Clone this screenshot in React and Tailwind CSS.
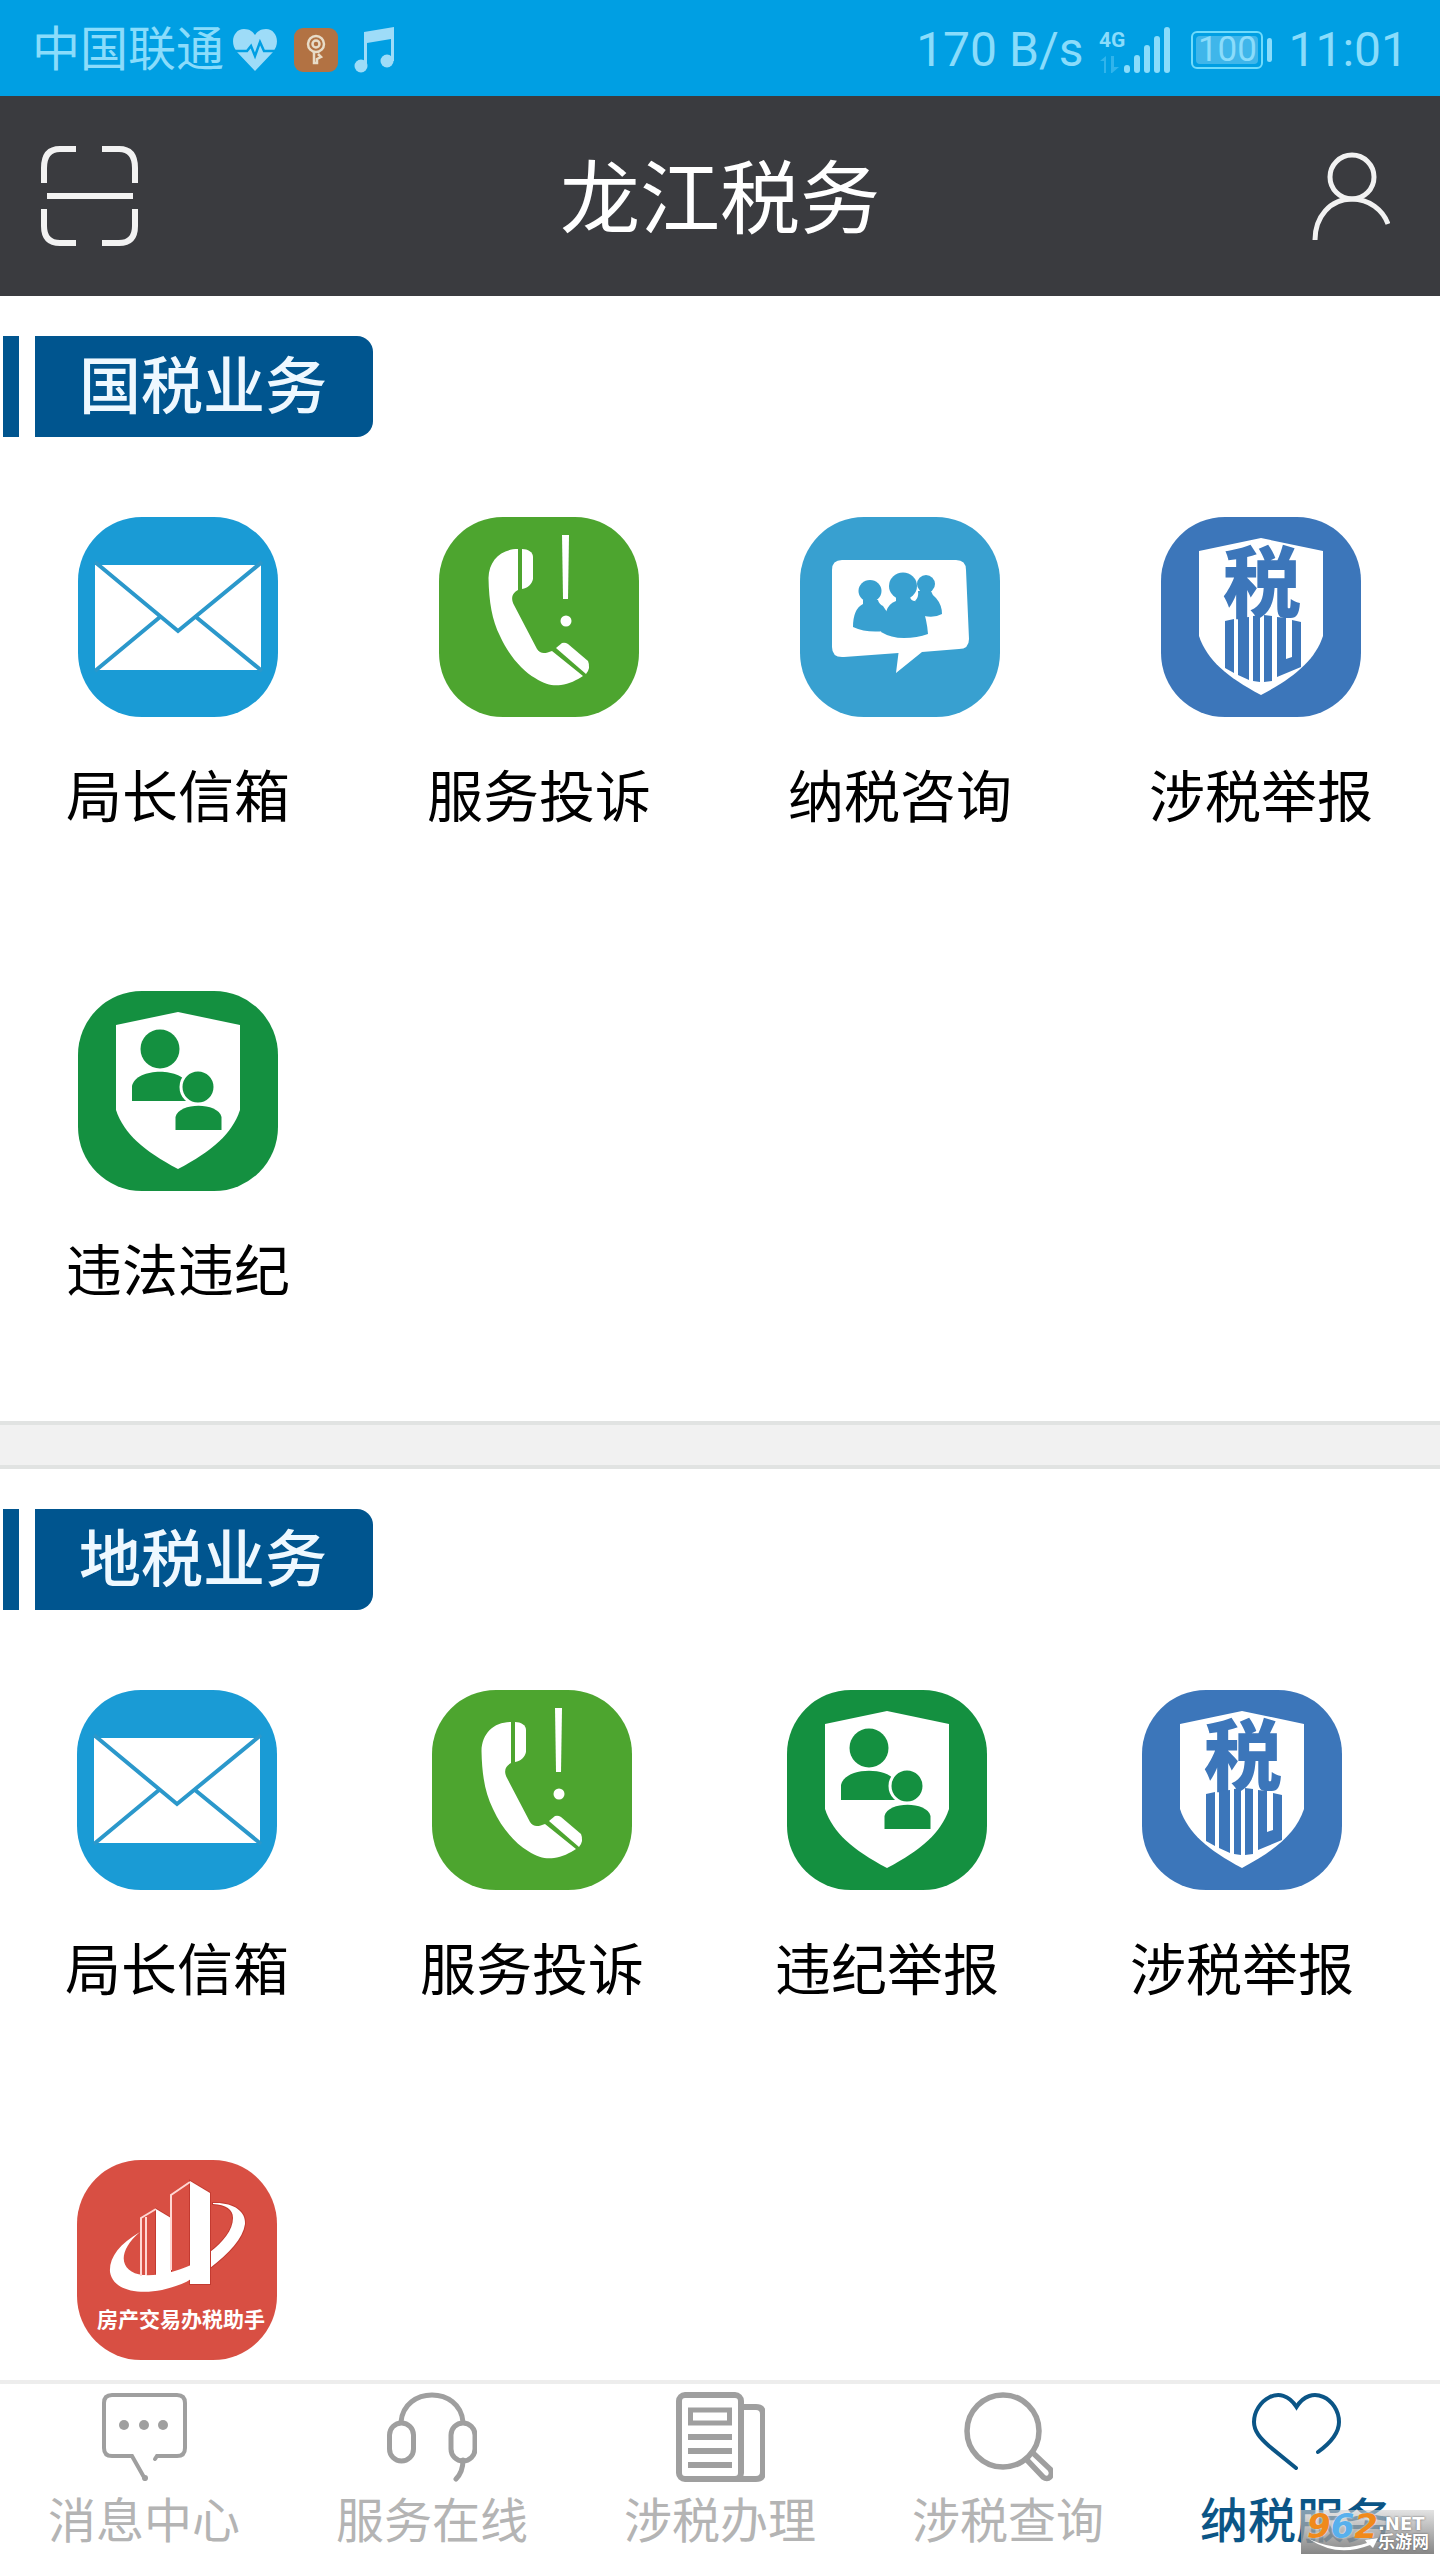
import { useState } from "react";

const tiles = {
  mail: { bg: "#1a9bd5", Art: MailArt },
  phone: { bg: "#4da52f", Art: PhoneArt },
  chat: { bg: "#38a0d0", Art: ChatArt },
  tax: { bg: "#3c76ba", Art: TaxArt },
  people: { bg: "#149040", Art: PeopleArt },
  house: { bg: "#d84f43", Art: HouseArt },
};

const nationalItems = [
  { icon: "mail", label: "局长信箱" },
  { icon: "phone", label: "服务投诉" },
  { icon: "chat", label: "纳税咨询" },
  { icon: "tax", label: "涉税举报" },
  { icon: "people", label: "违法违纪" },
];

const localItems = [
  { icon: "mail", label: "局长信箱" },
  { icon: "phone", label: "服务投诉" },
  { icon: "people", label: "违纪举报" },
  { icon: "tax", label: "涉税举报" },
  { icon: "house" },
];

const tabs = [
  { label: "消息中心", Icon: MessageIcon },
  { label: "服务在线", Icon: HeadsetIcon },
  { label: "涉税办理", Icon: NewsIcon },
  { label: "涉税查询", Icon: SearchIcon },
  { label: "纳税服务", Icon: HeartIcon },
];

const SHIELD = "M100 21 L162 34 V119 C154 143 134 160 100 178 C66 160 46 143 38 119 V34 Z";

function MailArt() {
  return (
    <>
      <rect x="17" y="48" width="166" height="105" fill="#fff" />
      <path d="M17 45 L100 114 L184 45 M82 100 L17 154 M118 100 L184 154" fill="none" stroke="#2b98cb" strokeWidth="4" />
    </>
  );
}

function PhoneArt() {
  return (
    <g fill="#fff">
      <path d="M79 32 C62 32 50 43 49.500 61 C50 85 53 103 61 119 C70 139 84 154 96 161 C107 168 114 169 122 168 C130 167 138 163 144 159 L113 134 C106 137 101 137 98 132 L75 88 C71 80 74 76 79 73 Z" />
      <path d="M83 32 C89 32 94 35 94 40 V62 C93 67 89 71 83 72 Z" />
      <path d="M117 131 L123 126 Q126 125 129 127 L149 144 Q152 151 147 157 Z" />
      <path d="M123 18 H130 L129 82 H124 Z" />
      <circle cx="127" cy="104" r="5.500" />
    </g>
  );
}

function ChatArt() {
  return (
    <>
      <path
        d="M42 43 H156 Q166 43 166 53 L169 122 Q169 132 159 132 L122 135 L96 156 L98.500 136 L44 140 Q32 141 32 130 V53 Q32 43 42 43 Z"
        fill="#fff"
      />
      <g fill="#38a0d0">
        <ellipse cx="70" cy="74" rx="11.500" ry="11" />
        <path d="M63 83 H78 Q79 87 83 89 L89 98 L84 114 Q66 116 53 110 Q53 92 63 87 Z" />
        <circle cx="126" cy="67" r="9" />
        <path d="M118 74 H131 Q132 78 136 81 Q142 88 142 97 Q135 101 124 99 L115 84 Q119 80 118 74 Z" />
        <ellipse cx="103" cy="69" rx="14" ry="13.500" />
        <path d="M96 80 H110 Q111 84 115 84 L122 89 Q127 103 128 117 Q117 121 104 121 Q91 121 81 115 L86 95 Q88 87 96 84 Z" />
      </g>
    </>
  );
}

function TaxArt() {
  return (
    <>
      <path d={SHIELD} fill="#fff" />
      <text
        x="101"
        y="95"
        textAnchor="middle"
        fill="#3c76ba"
        fontFamily="'Noto Sans CJK SC', sans-serif"
        fontSize="78"
        fontWeight="900"
      >
        税
      </text>
      <path
        d="M64 104 L73 102 V156 L64 151 Z M77 101 L88 100 V163 L77 158 Z M92 99 L99 98 V165 L92 164 Z M103 98 L111 99 V164 L103 165 Z M116 100 L125 101 V142 L131 140 V103 L140 105 V150 L116 160 Z"
        fill="#3c76ba"
      />
    </>
  );
}

function PeopleArt() {
  return (
    <>
      <path d={SHIELD} fill="#fff" />
      <g fill="#149040">
        <circle cx="82" cy="58" r="19.500" />
        <path d="M54 110 V95 C58 76 106 76 110 95 V110 Z" />
        <circle cx="120" cy="96" r="17" stroke="#fff" strokeWidth="3" />
        <path d="M97.500 139 V126 C101 111 140 111 143.500 126 V139 Z" />
      </g>
    </>
  );
}

function HouseArt() {
  return (
    <>
      <g fill="#fff" stroke="#c33a30" strokeWidth="2" paintOrder="stroke">
        <path d="M136 43 C156 42 169 51 168 64 C166 79 152 93 133 108 V92 C146 82 156 70 156 58 C156 49 149 45 136 44 Z" />
        <path d="M79 49 L94 58 V118 L79 120 Z" />
        <path d="M113 21 L133 33 V124 H113 Z" />
      </g>
      <path
        d="M63 72 C42 84 32 98 33 112 C36 130 60 135 85 130 C97 127 107 124 114 119 V105 C98 112 82 116 66 115 C44 113 38 93 63 72 Z"
        fill="#fff"
      />
      <path d="M64 116 V58 L79 49 M69 115 V57 M94 110 V35 L113 22" fill="none" stroke="#ffd6d2" strokeWidth="2" />
      <text
        x="104"
        y="167"
        textAnchor="middle"
        fill="#fff"
        fontFamily="'Noto Sans CJK SC', sans-serif"
        fontSize="21"
        fontWeight="700"
      >
        房产交易办税助手
      </text>
    </>
  );
}

function MessageIcon() {
  return (
    <svg viewBox="0 0 90 90" className="size-[90px]" fill="none" stroke="currentColor" strokeWidth="4" strokeLinecap="round">
      <path d="M46 87 L33 64 H13 Q5 64 5 56 V11 Q5 3 13 3 H78 Q86 3 86 11 V56 Q86 64 78 64 H58 L56 67" />
      <g fill="currentColor" stroke="none">
        <circle cx="25" cy="33" r="5" />
        <circle cx="45" cy="33" r="5" />
        <circle cx="64" cy="33" r="5" />
        <circle cx="46" cy="86" r="3" />
      </g>
    </svg>
  );
}

function HeadsetIcon() {
  return (
    <svg viewBox="0 0 90 90" className="size-[90px]" fill="none" stroke="currentColor" strokeWidth="5" strokeLinecap="round">
      <rect x="2.500" y="31" width="24" height="38" rx="12" />
      <rect x="64" y="31" width="24" height="38" rx="12" />
      <path d="M14 30 C17 -6 73 -6 76 30 M76 68 Q76 80 69 87" />
    </svg>
  );
}

function NewsIcon() {
  return (
    <svg viewBox="0 0 90 90" className="size-[90px]" fill="none" stroke="currentColor" strokeWidth="6">
      <rect x="4" y="3" width="62" height="84" rx="6" />
      <path d="M66 15 H81 Q88 15 88 22 V80 Q88 87 81 87 H60" />
      <rect x="15.500" y="18" width="39" height="13" strokeWidth="5" />
      <path d="M13 45 H57 M13 59 H57 M13 73 H57" />
    </svg>
  );
}

function SearchIcon() {
  return (
    <svg viewBox="0 0 90 90" className="size-[90px]" fill="none" stroke="currentColor" strokeWidth="5.500">
      <circle cx="40" cy="39" r="36" />
      <path d="M64 68 L80 85 Q84 88 87 85 Q90 81 87 77 L70 61" />
    </svg>
  );
}

function HeartIcon() {
  return (
    <svg viewBox="0 0 90 90" className="size-[90px]" fill="none" stroke="currentColor" strokeWidth="4" strokeLinecap="round">
      <path d="M45 76 L18 54 C9 46 3 39 3 30 C3 9 30 -10 45.500 15 C60 -9 88 7 88 30 C88 42 78 52 67 60" />
    </svg>
  );
}

function StatusBar() {
  return (
    <div className="flex h-24 shrink-0 items-center justify-between bg-[#009fe3] px-8 pt-1 text-[48px] leading-[56px] text-[#8adcfb]">
      <div className="flex items-center">
        <span>中国联通</span>
        <svg viewBox="0 0 46 42" className="ml-2 h-[42px] w-[46px]">
          <path d="M23 42 L5 23 C-3 13 2 0 12 0 C18 0 21 3 23 6 C25 3 28 0 34 0 C44 0 49 13 41 23 Z" fill="#9edcf8" />
          <path d="M3 22 H15 L19 17 L23 27 L28 13 L32 22 H44" fill="none" stroke="#009fe3" strokeWidth="2.500" />
        </svg>
        <svg viewBox="0 0 44 44" className="ml-4 size-11">
          <rect width="44" height="44" rx="9" fill="#b27243" />
          <g fill="none" stroke="#e8dcc8" strokeWidth="2.500">
            <circle cx="22" cy="16" r="8" />
            <circle cx="22" cy="16" r="3.500" />
            <path d="M20 24 V35 H23 V31 L27 29 L24 26" />
          </g>
        </svg>
        <svg viewBox="0 0 40 46" className="ml-4 h-[46px] w-10" fill="#9edcf8">
          <path d="M10 5 L40 0 V34 H37 V12 L13 16 V39 H10 Z" />
          <circle cx="7" cy="39" r="6.500" />
          <circle cx="33" cy="34" r="6.500" />
        </svg>
      </div>
      <div className="flex items-center">
        <span>170 B/s</span>
        <svg viewBox="0 0 72 46" className="ml-4 h-[46px] w-[72px]" fill="#8adcfb">
          <text x="0" y="20" fontFamily="Roboto, sans-serif" fontSize="21" fontWeight="700">
            4G
          </text>
          <path d="M5 46 V34 H1 L7 29 V46 Z M12 29 H15 V40 H20 L13 46 H12 Z" opacity="0.350" />
          <rect x="25" y="38" width="6" height="8" rx="3" />
          <rect x="35" y="28" width="6" height="18" rx="3" />
          <rect x="45" y="18" width="6" height="28" rx="3" />
          <rect x="55" y="9" width="6" height="37" rx="3" />
          <rect x="65" y="0" width="6" height="46" rx="3" />
        </svg>
        <div className="ml-5 flex items-center gap-1">
          <div className="flex h-[38px] w-[72px] items-center justify-center rounded-md border-2 border-[#6fdbfb] p-[3px]">
            <span className="flex h-full w-full items-center justify-center rounded-sm bg-[#3fb6ea] text-[35px]">100</span>
          </div>
          <span className="h-6 w-[5px] rounded-full bg-[#8adcfb]" />
        </div>
        <span className="ml-4">11:01</span>
      </div>
    </div>
  );
}

function Header() {
  return (
    <header className="flex h-[200px] shrink-0 items-center justify-between bg-[#3a3b3f] px-10 text-white">
      <button type="button" aria-label="扫一扫" className="w-[120px]">
        <svg viewBox="0 0 98 100" className="h-[100px] w-[98px]" fill="none" stroke="#f2f2f2" strokeWidth="6">
          <path d="M4 37 V22 Q4 3 20 3 H36 M62 3 H79 Q95 3 95 22 V37 M95 63 V80 Q95 97 79 97 H62 M36 97 H20 Q4 97 4 80 V63 M7 50 H93" />
        </svg>
      </button>
      <h1 className="pt-2 text-[80px] leading-[96px]">龙江税务</h1>
      <button type="button" aria-label="我的" className="flex w-[120px] justify-end pr-2.5">
        <svg viewBox="0 0 78 88" className="h-22 w-[78px]" fill="none" stroke="#f2f2f2" strokeWidth="5">
          <circle cx="40" cy="25" r="22" />
          <path d="M3 88 C3 65 18 47 40 47 C57 47 71 58 76 72" />
        </svg>
      </button>
    </header>
  );
}

function SectionTitle({ children }) {
  return (
    <div className="flex h-[101px] items-stretch gap-4 pl-[3px]">
      <span className="w-4 bg-[#00558f]" />
      <h2 className="flex items-center rounded-r-2xl bg-[#00558f] pt-0.5 pr-[46px] pl-11 text-[62px] leading-none font-medium text-[#eef8ff]">
        {children}
      </h2>
    </div>
  );
}

function ServiceItem({ icon, label }) {
  const { bg, Art } = tiles[icon];
  return (
    <a href="#" aria-label={label || "房产交易办税助手"} className="flex flex-col items-center">
      <svg viewBox="0 0 200 200" className="size-[200px]">
        <rect width="200" height="200" rx="64" fill={bg} />
        <Art />
      </svg>
      {label && <span className="mt-[50px] text-[56px] leading-[62px] whitespace-nowrap">{label}</span>}
    </a>
  );
}

function TabBar() {
  const [active, setActive] = useState("纳税服务");

  return (
    <nav className="grid shrink-0 grid-cols-5 border-t-4 border-[#ededed] bg-white pt-2">
      {tabs.map(({ label, Icon }) => (
        <button
          key={label}
          type="button"
          onClick={() => setActive(label)}
          className={`flex flex-col items-center ${active === label ? "text-[#0b5586]" : "text-[#9f9f9f]"}`}
        >
          <Icon />
          <span className={`pt-0.5 text-[48px] leading-[76px] ${active === label ? "font-medium" : "text-[#b4b4b4]"}`}>
            {label}
          </span>
        </button>
      ))}
    </nav>
  );
}

function Watermark() {
  return (
    <div className="absolute right-1.5 bottom-1.5 flex h-11 w-[133px] bg-linear-to-b from-[#d0d0d0]/60 to-[#808080]/95 pl-1.5 font-['DejaVu_Sans','Noto_Sans_CJK_SC',sans-serif] font-bold text-white">
      <span className="w-[71px] text-[34px] leading-8 italic [text-shadow:0_0_2px_#fff]">
        <span className="text-[#f08a1c]">9</span>
        <span className="text-[#58b0ec]">6</span>
        <span className="text-[#f08a1c]">2</span>
      </span>
      <span className="flex flex-col pt-1 [text-shadow:0_0_2px_#555]">
        <span className="text-[18px] leading-5">.NET</span>
        <span className="text-[17px] leading-4">乐游网</span>
      </span>
      <svg viewBox="0 0 70 14" className="absolute bottom-0.5 left-2 h-3.5 w-[70px]">
        <path d="M0 1 Q30 15 58 5 L56 2 L69 0 L64 10 L61 7 Q28 20 0 1 Z" fill="#fff" />
      </svg>
    </div>
  );
}

export default function App() {
  return (
    <div className="relative flex h-screen flex-col overflow-hidden bg-white font-['Roboto','Noto_Sans_CJK_SC',sans-serif] text-black">
      <StatusBar />
      <Header />
      <main className="min-h-0 flex-1 overflow-y-auto [scrollbar-width:none]">
        <section className="pt-10 pb-[118px]">
          <SectionTitle>国税业务</SectionTitle>
          <div className="mt-20 grid grid-cols-[repeat(4,224px)] justify-between gap-y-[162px] pr-[67px] pl-[66px]">
            {nationalItems.map((item) => (
              <ServiceItem key={item.label} {...item} />
            ))}
          </div>
        </section>
        <div className="h-12 border-y-4 border-[#e1e3e2] bg-[#f1f1f1]" />
        <section className="pt-10 pb-5">
          <SectionTitle>地税业务</SectionTitle>
          <div className="mt-20 grid grid-cols-[repeat(4,224px)] justify-between gap-y-[158px] pr-[86px] pl-[65px]">
            {localItems.map((item) => (
              <ServiceItem key={item.icon} {...item} />
            ))}
          </div>
        </section>
      </main>
      <TabBar />
      <Watermark />
    </div>
  );
}
